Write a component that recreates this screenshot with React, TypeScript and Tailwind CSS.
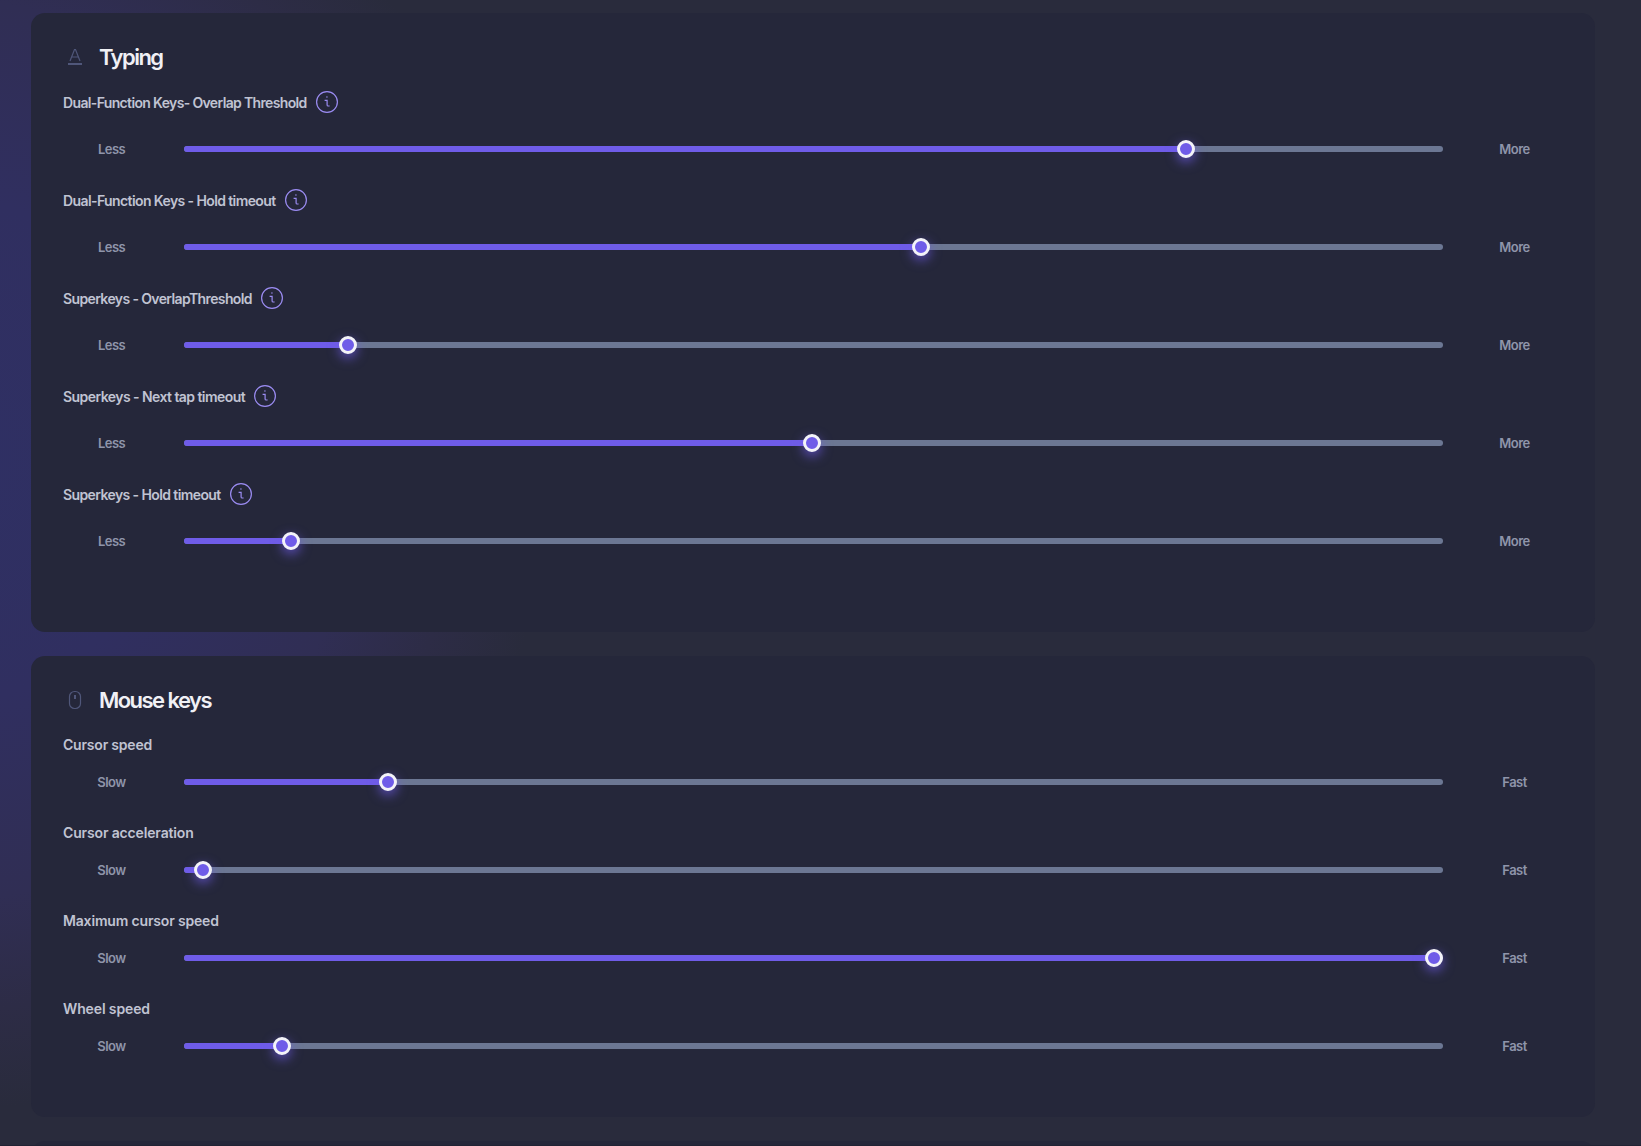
import React from "react";

type Row = { label: string; x: number; cls: string };

const typing: Row[] = [
  { label: "Dual-Function Keys- Overlap Threshold", x: 1002, cls: "tracking-[-0.65px]" },
  { label: "Dual-Function Keys - Hold timeout", x: 737, cls: "tracking-[-0.6px]" },
  { label: "Superkeys - OverlapThreshold", x: 164, cls: "tracking-[-0.62px]" },
  { label: "Superkeys - Next tap timeout", x: 628, cls: "tracking-[-0.56px]" },
  { label: "Superkeys - Hold timeout", x: 107, cls: "tracking-[-0.6px]" },
];

const mouse: Row[] = [
  { label: "Cursor speed", x: 204, cls: "tracking-[-0.2px]" },
  { label: "Cursor acceleration", x: 19, cls: "tracking-[-0.15px]" },
  { label: "Maximum cursor speed", x: 1250, cls: "tracking-[-0.17px]" },
  { label: "Wheel speed", x: 98, cls: "tracking-[-0.13px]" },
];

function InfoIcon() {
  return (
    <svg className="ml-[9px] shrink-0" width="22" height="22" viewBox="0 0 22 22" fill="none" stroke="#9b8cf2">
      <circle cx="11" cy="11" r="10.4" strokeWidth="1.2" />
      <path d="M8.6 9.3h2.5v4.6q0 1.1 1.1 1.1h1.4M10.1 6h1.6" strokeWidth="1.2" />
    </svg>
  );
}

function Slider({ x, left, right }: { x: number; left: string; right: string }) {
  return (
    <div className="flex h-[18px] items-center text-[13px] font-semibold tracking-[-0.55px] text-[#8f95aa]">
      <span className="w-[97px] pt-0.5 text-center">{left}</span>
      <div className="relative ml-6 h-1.5 w-[1259px] rounded-[3px] bg-[#6c7793]">
        <div className="h-1.5 rounded-l-[3px] bg-[#6f5ce8]" style={{ width: x }} />
        <div
          className="absolute -top-1.5 size-[18px] rounded-full border-[3px] border-[#f3f3f8] bg-[#6f5ce8] shadow-[0_4px_12px_rgba(111,92,232,0.75)]"
          style={{ left: x - 9 }}
        />
      </div>
      <span className="ml-[23px] w-[97px] pt-0.5 text-center">{right}</span>
    </div>
  );
}

export default function App() {
  return (
    <div className="flex h-[1146px] w-[1641px] flex-col gap-6 overflow-hidden border-b border-[#212334] bg-[#292b3c] bg-[radial-gradient(ellipse_600px_660px_at_-50px_450px,#2f3064_0%,#302f60_38%,#302e54_68%,#2d2c46_85%,#292b3c_100%)] pl-[31px] pt-[13px] font-['Inter',sans-serif]">
      <section className="h-[619px] w-[1564px] shrink-0 rounded-[14px] bg-[#25273a] pl-8 pt-8">
        <div className="flex h-6 items-center">
          <svg className="shrink-0" width="24" height="24" viewBox="0 0 24 24" fill="none" stroke="#50577a">
            <path d="M7 16 11.5 4.5h1L17 16M8.7 12h6.6" strokeWidth="1.2" />
            <path d="M5 19h14" strokeWidth="2" />
          </svg>
          <h2 className="ml-3 text-[22px] font-semibold tracking-[-1.55px] text-[#f0f0f5]">Typing</h2>
        </div>
        <div className="mt-[22px]">
          {typing.map((r) => (
            <div key={r.label} className="h-[98px]">
              <div className="mb-[27px] flex h-[22px] items-center">
                <h3 className={"whitespace-nowrap text-[14px] font-semibold text-[#c0c3d2] " + r.cls}>{r.label}</h3>
                <InfoIcon />
              </div>
              <Slider x={r.x} left="Less" right="More" />
            </div>
          ))}
        </div>
      </section>
      <section className="h-[461px] w-[1564px] shrink-0 rounded-[14px] bg-[#25273a] pl-8 pt-8">
        <div className="flex h-6 items-center">
          <svg className="shrink-0" width="24" height="24" viewBox="0 0 24 24" fill="none" stroke="#50577a">
            <rect x="6.5" y="3.5" width="11" height="17" rx="5" strokeWidth="1.2" />
            <path d="M12 7v4" strokeWidth="2" />
          </svg>
          <h2 className="ml-3 text-[22px] font-semibold tracking-[-1.55px] text-[#f0f0f5]">Mouse keys</h2>
        </div>
        <div className="mt-[21px]">
          {mouse.map((r) => (
            <div key={r.label} className="h-[88px]">
              <div className="mb-[18px] flex h-[22px] items-center">
                <h3 className={"whitespace-nowrap text-[14px] font-semibold text-[#c0c3d2] " + r.cls}>{r.label}</h3>
              </div>
              <Slider x={r.x} left="Slow" right="Fast" />
            </div>
          ))}
        </div>
      </section>
      <section className="h-10 w-[1564px] shrink-0 rounded-[14px] bg-[#25273a]" />
    </div>
  );
}
